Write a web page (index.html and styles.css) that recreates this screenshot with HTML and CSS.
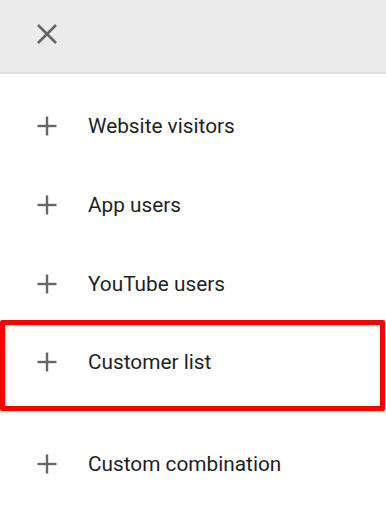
FILE: index.html
```html
<!DOCTYPE html>
<html lang="en">

<head>
  <meta charset="UTF-8">
  <meta name="viewport" content="width=device-width, initial-scale=1.0">
  <title>New audience</title>
  <link rel="stylesheet" href="styles.css">
</head>

<body>
  <!-- Top bar with close button -->
  <header class="topBar">
    <button class="closeButton" aria-label="Close">
      <svg width="20" height="20" viewBox="0 0 20 20">
        <line x1="1" y1="1" x2="19" y2="19" />
        <line x1="19" y1="1" x2="1" y2="19" />
      </svg>
    </button>
  </header>

  <!-- Audience types -->
  <ul class="audienceList">
    <li class="audienceItem">
      <svg class="plusIcon" width="20" height="20" viewBox="0 0 20 20">
        <line x1="10" y1="0.5" x2="10" y2="19.5" />
        <line x1="0.5" y1="10" x2="19.5" y2="10" />
      </svg>
      <span>Website visitors</span>
    </li>
    <li class="audienceItem">
      <svg class="plusIcon" width="20" height="20" viewBox="0 0 20 20">
        <line x1="10" y1="0.5" x2="10" y2="19.5" />
        <line x1="0.5" y1="10" x2="19.5" y2="10" />
      </svg>
      <span>App users</span>
    </li>
    <li class="audienceItem">
      <svg class="plusIcon" width="20" height="20" viewBox="0 0 20 20">
        <line x1="10" y1="0.5" x2="10" y2="19.5" />
        <line x1="0.5" y1="10" x2="19.5" y2="10" />
      </svg>
      <span>YouTube users</span>
    </li>
    <li class="audienceItem highlighted">
      <svg class="plusIcon" width="20" height="20" viewBox="0 0 20 20">
        <line x1="10" y1="0.5" x2="10" y2="19.5" />
        <line x1="0.5" y1="10" x2="19.5" y2="10" />
      </svg>
      <span>Customer list</span>
    </li>
    <li class="audienceItem combination">
      <svg class="plusIcon" width="20" height="20" viewBox="0 0 20 20">
        <line x1="10" y1="0.5" x2="10" y2="19.5" />
        <line x1="0.5" y1="10" x2="19.5" y2="10" />
      </svg>
      <span>Custom combination</span>
    </li>
  </ul>
</body>

</html>
```

FILE: styles.css
```css
/* Base */
body {
  margin: 0;
  font-family: Roboto, 'Noto Sans', sans-serif;
  background-color: #ffffff;
  color: #1f1f1f;
}

/* Top bar */
.topBar {
  height: 72px;
  background-color: #ebebeb;
  border-bottom: 2px solid #e0e0e0;
  display: flex;
  align-items: center;
  padding-left: 37px;
}

.closeButton {
  background: none;
  border: none;
  padding: 0;
  display: flex;
  margin-top: -4px;
  cursor: pointer;
}

.closeButton line {
  stroke: #666666;
  stroke-width: 2.6;
}

/* List of audiences */
.audienceList {
  list-style: none;
  margin: 0;
  padding: 12px 0 0;
}

.audienceItem {
  height: 79px;
  display: flex;
  align-items: center;
  gap: 31px;
  padding-left: 37px;
  font-size: 20.8px;
}

.plusIcon line {
  stroke: #666666;
  stroke-width: 2.4;
}

/* Red annotation box */
.highlighted {
  height: 74px;
  margin: -3px 1px 0 0;
  border: 5px solid #ff0000;
  border-radius: 2px;
  padding: 0 0 7px 32px;
}

.combination {
  margin-top: 13px;
}
```
